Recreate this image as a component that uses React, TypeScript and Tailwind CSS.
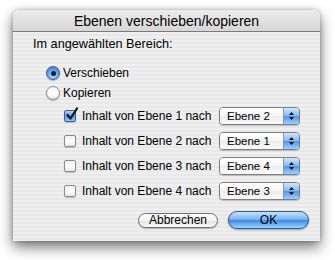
import React from "react";

const ROWS = [
  { from: 1, to: "Ebene 2", checked: true },
  { from: 2, to: "Ebene 1", checked: false },
  { from: 3, to: "Ebene 4", checked: false },
  { from: 4, to: "Ebene 3", checked: false },
];

function Radio({ on }: { on?: boolean }) {
  return (
    <span
      className={`flex h-[14px] w-[14px] shrink-0 items-center justify-center rounded-full border ${
        on
          ? "border-[#3a5f9a] bg-[radial-gradient(circle_at_50%_70%,#b9e0ff_0%,#5b9ee8_55%,#2d6fc4_100%)]"
          : "border-[#8a8a8a] bg-[linear-gradient(to_bottom,#f4f4f4,#ffffff_60%,#e2e2e2)]"
      } shadow-[0_1px_1px_rgba(0,0,0,0.25)]`}
    >
      {on && <span className="h-[5px] w-[5px] rounded-full bg-[#0b1a33]" />}
    </span>
  );
}

function Check({ on }: { on?: boolean }) {
  return (
    <span
      className={`relative h-[12px] w-[12px] shrink-0 rounded-[2px] border ${
        on
          ? "border-[#3a5f9a] bg-[linear-gradient(to_bottom,#a9d4ff,#5b9ee8_55%,#8cc4ff)]"
          : "border-[#8a8a8a] bg-[linear-gradient(to_bottom,#f0f0f0,#ffffff_55%,#e4e4e4)]"
      } shadow-[0_1px_1px_rgba(0,0,0,0.2)]`}
    >
      {on && (
        <svg className="absolute left-[0px] top-[-4px]" width="14" height="14" viewBox="0 0 14 14">
          <path d="M2.5 8 L5.5 11.5 L12 1.5" fill="none" stroke="#111" strokeWidth="2.2" strokeLinecap="round" strokeLinejoin="round" />
        </svg>
      )}
    </span>
  );
}

function Popup({ value }: { value: string }) {
  return (
    <div className="flex h-[18px] w-[81px] overflow-hidden rounded-[4px] border border-[#7d7d7d] bg-white shadow-[0_1px_1px_rgba(0,0,0,0.2)]">
      <span className="flex-1 whitespace-nowrap bg-[linear-gradient(to_bottom,#ffffff,#f6f6f6_50%,#ececec_51%,#fafafa)] pl-[7px] text-[11.5px] leading-[16px]">
        {value}
      </span>
      <span className="flex w-[16px] flex-col items-center justify-center gap-[2px] border-l border-[#7d9ac4] bg-[linear-gradient(to_bottom,#cfe6ff,#7fb8f5_50%,#4f94e6_51%,#9fd0ff)]">
        <svg width="5" height="3" viewBox="0 0 5 3"><path d="M0 3 L2.5 0 L5 3Z" fill="#111" /></svg>
        <svg width="5" height="3" viewBox="0 0 5 3"><path d="M0 0 L2.5 3 L5 0Z" fill="#111" /></svg>
      </span>
    </div>
  );
}

export default function App() {
  return (
    <div className="h-[260px] w-[335px] bg-white pl-[13px] pt-[10px] font-['Liberation_Sans',Arial,sans-serif] text-[12px] text-black">
      <div className="flex h-[231px] w-[307px] flex-col overflow-hidden rounded-t-[6px] shadow-[0_6px_14px_rgba(0,0,0,0.55),0_0_4px_rgba(0,0,0,0.25)]">
        <div className="flex h-[22px] shrink-0 items-center justify-center border-b border-[#7a7a7a] bg-[linear-gradient(to_bottom,#ececec,#d6d6d6)] text-[14px] leading-[16px]">
          Ebenen verschieben/kopieren
        </div>
        <div className="flex flex-1 flex-col bg-[repeating-linear-gradient(to_bottom,#efefef_0px,#efefef_2px,#e8e8e8_2px,#e8e8e8_4px)] pl-[20px] pr-[11px]">
          <div className="mt-[4px] h-[16px] whitespace-nowrap text-[12.7px] leading-[16px]">Im angewählten Bereich:</div>
          <div className="ml-[13px] mt-[13px] flex flex-col gap-[4px]">
            <div className="flex h-[16px] items-center gap-[3px]">
              <Radio on />
              <span>Verschieben</span>
            </div>
            <div className="flex h-[16px] items-center gap-[3px]">
              <Radio />
              <span>Kopieren</span>
            </div>
          </div>
          <div className="ml-[31px] mt-[6px] flex w-[236px] flex-col gap-[7px]">
            {ROWS.map((r) => (
              <div key={r.from} className="flex h-[18px] items-center justify-between">
                <div className="flex items-center gap-[6px] whitespace-nowrap">
                  <Check on={r.checked} />
                  <span>Inhalt von Ebene {r.from} nach</span>
                </div>
                <Popup value={r.to} />
              </div>
            ))}
          </div>
          <div className="mt-[11px] flex items-center justify-end gap-[10px]">
            <button className="h-[15px] w-[80px] rounded-full border border-[#6f6f6f] bg-[linear-gradient(to_bottom,#ffffff,#f2f2f2_50%,#e2e2e2_51%,#fbfbfb)] text-[12px] leading-[13px] shadow-[0_1px_1px_rgba(0,0,0,0.25)]">
              Abbrechen
            </button>
            <button className="h-[18px] w-[81px] rounded-full border border-[#2e5a94] bg-[linear-gradient(to_bottom,#c5e2ff,#6fb0f2_50%,#3d88df_51%,#9dd4ff)] text-[12px] leading-[16px] shadow-[0_1px_2px_rgba(0,0,0,0.35)]">
              OK
            </button>
          </div>
        </div>
      </div>
    </div>
  );
}
